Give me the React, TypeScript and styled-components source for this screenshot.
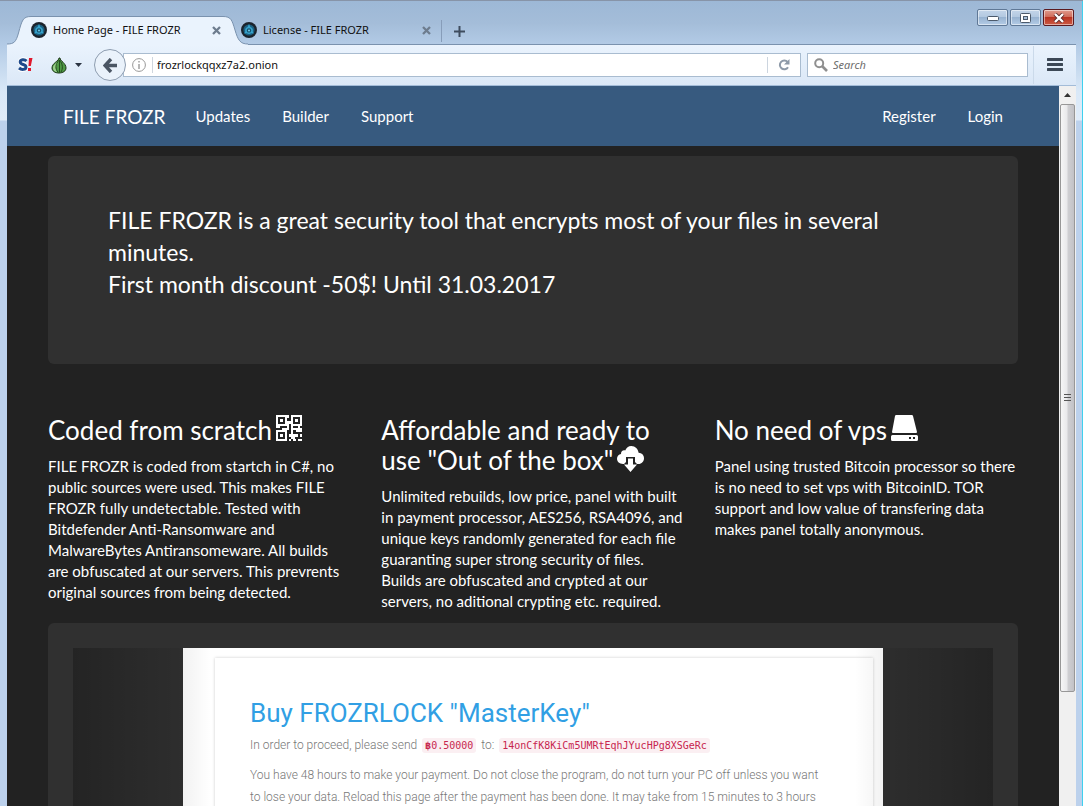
import React from "react";
import styled, { createGlobalStyle, css } from "styled-components";

const Global = createGlobalStyle`
  * { box-sizing: border-box; }
  html, body, #root { height: 100%; }
  body { margin: 0; overflow: hidden; background: #222; }
  button, input { font: inherit; color: inherit; }
  h1, h2, h3, p, ul { margin: 0; padding: 0; }
`;

const Window = styled.div`
  height: 100%;
  display: flex;
  flex-direction: column;
  padding: 0 7px;
  border-top: 1px solid #8794a8;
  background:
    linear-gradient(to bottom, #9db8d6 0px, #a4bdd9 22px, #b3cbe6 44px, #d9e8f7 90px, #e0ecf9 119px, #bcd1ec 120px);
  font: 11px/16px "Noto Sans", "Open Sans", sans-serif;
  color: #111;
  position: relative;
`;

const RightEdge = styled.div`
  position: absolute;
  top: 0;
  right: 0;
  bottom: 0;
  width: 1px;
  background: #3fd0ee;
`;

const TabStrip = styled.div`
  flex: none;
  display: flex;
  align-items: flex-end;
  height: 44px;
  padding-left: 14px;
  border-bottom: 1px solid #7a92ae;
`;

const Tab = styled.div<{ $active?: boolean }>`
  display: flex;
  align-items: center;
  height: 28px;
  width: 210px;
  padding: 0 10px;
  gap: 6px;
  position: relative;
  ${(p) => p.$active && css`z-index: 1;`}
`;

const TabShape = styled.svg`
  position: absolute;
  left: -21px;
  top: 0;
  z-index: -1;
`;

const TabTitle = styled.span`
  flex: 1;
  white-space: nowrap;
`;

const IconButton = styled.button`
  flex: none;
  display: flex;
  align-items: center;
  justify-content: center;
  padding: 0;
  border: 0;
  background: none;
`;

const NewTab = styled(IconButton)`
  width: 36px;
  height: 22px;
  margin-bottom: 2px;
  border-left: 1px solid #879db9;
`;

const WindowControls = styled.div`
  margin-left: auto;
  align-self: flex-start;
  display: flex;
  gap: 2px;
  padding: 8px 2px 0 0;
`;

const ControlButton = styled(IconButton)<{ $close?: boolean }>`
  width: 31px;
  height: 17px;
  border: 1px solid ${(p) => (p.$close ? "#5b1a20" : "#5f7896")};
  border-radius: 2px;
  box-shadow: inset 0 0 0 1px rgba(255, 255, 255, 0.5);
  background: ${(p) =>
    p.$close
      ? "linear-gradient(#e09b8d 0%, #cf6a58 48%, #b93422 50%, #cb5a44 100%)"
      : "linear-gradient(#c3d5e9 0%, #b2c8e0 48%, #98b3d1 50%, #b4cce6 100%)"};
`;

const Toolbar = styled.div`
  flex: none;
  display: flex;
  align-items: center;
  height: 41px;
  border-bottom: 1px solid #a3bcd8;
  background: linear-gradient(#eaf3fd, #dbe8f7);
`;

const AddonButton = styled(IconButton)`
  height: 24px;
  gap: 8px;
  margin-left: 11px;
  & + & { margin-left: 18px; }
`;

const BackButton = styled(IconButton)`
  width: 32px;
  height: 32px;
  margin-left: 12px;
  border: 1px solid #8e9db0;
  border-radius: 50%;
  background: #eaf2fb;
  z-index: 1;
`;

const Field = styled.div`
  display: flex;
  align-items: center;
  height: 24px;
  border: 1px solid #a9bcd0;
  background: #fff;
`;

const AddressBar = styled(Field)`
  flex: 1;
  margin-left: -3px;
  padding-left: 8px;
`;

const SearchBar = styled(Field)`
  width: 221px;
  margin: 0 5px 0 6px;
  padding-left: 6px;
  gap: 5px;
`;

const TextInput = styled.input<{ $divided?: boolean }>`
  flex: 1;
  min-width: 0;
  height: 16px;
  border: 0;
  padding: 0;
  outline: 0;
  background: none;
  ${(p) => p.$divided && css`
    margin-left: 6px;
    padding-left: 4px;
    border-left: 1px solid #cfd6de;
  `}
  &::placeholder { font-style: italic; color: #6d6d6d; opacity: 1; }
`;

const Reload = styled(IconButton)`
  width: 33px;
  height: 16px;
  border-left: 1px solid #ccd5df;
`;

const MenuButton = styled(IconButton)`
  width: 43px;
  height: 38px;
  border-left: 1px solid #cbdaea;
`;

const Body = styled.div`
  flex: 1;
  min-height: 0;
  display: flex;
`;

const Viewport = styled.main`
  flex: 1;
  min-width: 0;
  overflow: hidden;
  background: #222;
  color: #fff;
  font: 15px/21px Lato, sans-serif;
`;

const ScrollTrack = styled.div`
  flex: none;
  width: 17px;
  display: flex;
  flex-direction: column;
  padding: 0 1px;
  background: #f0f0f0;
`;

const ScrollArrow = styled(IconButton)`
  height: 18px;
`;

const ScrollThumb = styled.div`
  height: 588px;
  display: flex;
  align-items: center;
  justify-content: center;
  border: 1px solid #979797;
  border-radius: 2px;
  background: linear-gradient(to right, #f6f6f6 0%, #e9e9eb 45%, #cfcfd2 55%, #c2c2c6 100%);
`;

const Container = styled.div`
  max-width: 970px;
  margin: 0 auto;
`;

const NavBar = styled.nav`
  height: 60px;
  background: #375a7f;
`;

const NavRow = styled(Container)`
  height: 60px;
  display: flex;
  align-items: center;
`;

const NavLink = styled.a<{ $brand?: boolean }>`
  padding: 0 15px;
  color: #fff;
  text-decoration: none;
  ${(p) => p.$brand && css`font-size: 19px;`}
`;

const NavGroup = styled.div`
  display: flex;
  gap: 2px;
  &:last-child { margin-left: auto; }
`;

const Panel = styled.section`
  border-radius: 6px;
  background: #303030;
`;

const Jumbotron = styled(Panel)`
  min-height: 208px;
  margin: 10px 0 48px;
  padding: 48px 60px;
  font-size: 23px;
  line-height: 32px;
`;

const Features = styled.div`
  display: grid;
  grid-template-columns: repeat(3, 1fr);
  column-gap: 30px;
`;

const Feature = styled.article`
  h2 {
    margin: 3px 0 11px;
    font-size: 26px;
    font-weight: 400;
    line-height: 30px;
  }
  h2 svg {
    margin-left: 4px;
    vertical-align: -2px;
  }
`;

const CarouselPanel = styled(Panel)`
  margin-top: 11px;
  padding: 25px;
`;

const Carousel = styled.div`
  position: relative;
  height: 400px;
  overflow: hidden;
`;

const CarouselControl = styled.button<{ $side: "left" | "right" }>`
  position: absolute;
  top: 0;
  bottom: 0;
  ${(p) => p.$side}: 0;
  width: 15%;
  border: 0;
  padding: 0;
  background: linear-gradient(to ${(p) => (p.$side === "left" ? "right" : "left")}, rgba(0, 0, 0, 0.25), rgba(0, 0, 0, 0));
`;

const Slide = styled.div`
  width: 700px;
  height: 100%;
  margin: 0 auto;
  padding: 10px 10px 0 32px;
  background: #fff;
`;

const PaymentCard = styled.div`
  height: 100%;
  padding: 39px 42px 39px 35px;
  box-shadow: 0 0 3px rgba(0, 0, 0, 0.2);
  color: #777;
  font: 300 12px/22px Roboto, sans-serif;

  h3 {
    margin-bottom: 5px;
    color: #319fe4;
    font-size: 26px;
    font-weight: 400;
    line-height: 32px;
  }
  p + p { margin-top: 8px; }
`;

const Code = styled.code`
  margin: 0 2px;
  padding: 2px 3px;
  border-radius: 3px;
  background: #fbeff2;
  color: #c7254e;
  font: 10px/14px "DejaVu Sans Mono", monospace;
`;

const SiteIcon = () => (
  <svg width="16" height="16" viewBox="0 0 16 16" aria-hidden="true">
    <circle cx="8" cy="8" r="8" fill="#1b232c" />
    <circle cx="8" cy="8" r="5.6" fill="#1b5f80" />
    <path d="M8 2 L9.4 5 A3.8 3.8 0 0 1 11.7 9.5 L12.8 11.6 L10.2 11.3 A3.8 3.8 0 0 1 5.8 11.3 L3.2 11.6 L4.3 9.5 A3.8 3.8 0 0 1 6.6 5 Z" fill="#36a3cc" />
    <circle cx="8" cy="8.4" r="2.2" fill="#17506c" />
    <circle cx="8" cy="8.4" r="1" fill="#6fd0ee" />
  </svg>
);

const CloseGlyph = () => (
  <svg width="9" height="9" viewBox="0 0 9 9" aria-hidden="true">
    <path d="M1 1 L8 8 M8 1 L1 8" stroke="#6d7c8e" strokeWidth="2.3" />
  </svg>
);

const QrIcon = () => (
  <svg width="27" height="27" viewBox="0 0 27 27" aria-hidden="true" fill="#fff" shapeRendering="crispEdges">
    <path fillRule="evenodd" d="M0 0H11V11H0Z M2 2V9H9V2Z M4 4H7V7H4Z" />
    <path fillRule="evenodd" d="M15 0H26V11H15Z M17 2V9H24V2Z M19 4H22V7H19Z" />
    <path fillRule="evenodd" d="M0 15H11V26H0Z M2 17V24H9V17Z M4 19H7V22H4Z" />
    <path d="M11 0H13V3H11Z M11 6H15V9H13V11H11Z M0 11H4V13H0Z M6 13H11V11H13V15H6Z M15 11H17V13H22V11H24V13H26V17H20V15H15Z M15 15H17V19H22V22H19V24H15V22H13V19H15Z M24 19H26V22H24Z M22 24H26V26H22Z M13 24H15V26H13Z M17 24H20V26H17Z" />
  </svg>
);

const CloudIcon = () => (
  <svg width="27" height="26" viewBox="0 0 27 26" aria-hidden="true" fill="#fff">
    <path d="M6 18 C2.5 18 0 15.8 0 12.8 C0 10.3 1.8 8.3 4 8 C3.8 5.5 6 3.8 8.2 4.5 C9.2 1.8 11.5 0 14.3 0 C18.2 0 21.3 3 21.6 6.8 C24.8 6.9 27 9.2 27 12.2 C27 15.4 24.6 18 21.5 18 H20 L18 16 V11 H9 V16 L7 18 Z" />
    <path d="M11 12.5 H16 V18.5 H20 L13.5 26 L7 18.5 H11 Z" />
  </svg>
);

const DriveIcon = () => (
  <svg width="27" height="27" viewBox="0 0 27 27" aria-hidden="true" fill="#fff">
    <path d="M4 1 Q4.2 0 5.2 0 H20.8 Q21.8 0 22 1 L26 17 Q26 18 25 18 H2 Q1 18 1 17 Z" />
    <path fillRule="evenodd" d="M1.5 20 H25.5 Q27 20 27 21.5 V24.5 Q27 26 25.5 26 H1.5 Q0 26 0 24.5 V21.5 Q0 20 1.5 20 Z M18 22 V24 H20 V22 Z M22 22 V24 H24 V22 Z" />
  </svg>
);

export default function App() {
  return (
    <Window>
      <Global />
      <TabStrip>
        <Tab $active>
          <TabShape width="250" height="29" viewBox="0 0 250 29" aria-hidden="true">
            <path
              d="M7 28 C14 28 16 26 18.500 17 C22 4 23 0.500 31 0.500 H223 C231 0.500 232 4 235 14 C238 24 240 28 248 28 V29 H7 Z"
              fill="#eaf3fd"
            />
            <path
              d="M7 28 C14 28 16 26 18.500 17 C22 4 23 0.500 31 0.500 H223 C231 0.500 232 4 235 14 C238 24 240 28 248 28"
              fill="none"
              stroke="#7a92ae"
            />
          </TabShape>
          <SiteIcon />
          <TabTitle>Home Page - FILE FROZR</TabTitle>
          <IconButton aria-label="Close tab"><CloseGlyph /></IconButton>
        </Tab>
        <Tab>
          <SiteIcon />
          <TabTitle>License - FILE FROZR</TabTitle>
          <IconButton aria-label="Close tab"><CloseGlyph /></IconButton>
        </Tab>
        <NewTab aria-label="New tab">
          <svg width="11" height="11" viewBox="0 0 11 11">
            <path d="M5.5 0 V11 M0 5.5 H11" stroke="#3e4c5e" strokeWidth="2" />
          </svg>
        </NewTab>
        <WindowControls>
          <ControlButton aria-label="Minimize">
            <svg width="12" height="6" viewBox="0 0 12 6">
              <rect x=".5" y="1.5" width="11" height="4" rx="1" fill="#fff" stroke="#4c5a6b" />
            </svg>
          </ControlButton>
          <ControlButton aria-label="Maximize">
            <svg width="11" height="10" viewBox="0 0 11 10">
              <rect x=".5" y=".5" width="10" height="9" rx="1" fill="#fff" stroke="#4c5a6b" />
              <rect x="3.5" y="3.5" width="4" height="3" fill="#a9c0da" stroke="#4c5a6b" />
            </svg>
          </ControlButton>
          <ControlButton $close aria-label="Close">
            <svg width="12" height="10" viewBox="0 0 12 10">
              <path d="M2 1 L10 9 M10 1 L2 9" stroke="#5a2a2a" strokeWidth="4" />
              <path d="M2 1 L10 9 M10 1 L2 9" stroke="#fff" strokeWidth="2.4" />
            </svg>
          </ControlButton>
        </WindowControls>
      </TabStrip>

      <Toolbar>
        <AddonButton aria-label="NoScript">
          <svg width="15" height="16" viewBox="0 0 15 16">
            <path d="M8.5 4 C6.5 2 2.2 2.5 2.2 5 C2.2 8.2 8 6.8 8 10 C8 12.8 3.5 13.2 1 11" fill="none" stroke="#fff" strokeWidth="5" />
            <path d="M8.500 4 C6.500 2 2.200 2.500 2.200 5 C2.200 8.200 8 6.800 8 10 C8 12.800 3.500 13.200 1 11" fill="none" stroke="#1e4a8c" strokeWidth="3" />
            <path d="M11 1 H14.500 L12.800 9 H10.500 Z M10 11 H13 V14 H10 Z" fill="#e0182d" />
          </svg>
        </AddonButton>
        <AddonButton aria-label="Tor">
          <svg width="16" height="17" viewBox="0 0 16 17">
            <path d="M8 1 C8 4 1 6 1 11 C1 14 4 16 8 16 C12 16 15 14 15 11 C15 6 9 4 9 1 Z" fill="#4f9a45" stroke="#1d3518" />
            <path d="M8.5 4 C5 6 2 8 2 11 C2 13.5 4 15 6 15 C4 11 5 7 8.5 4 Z" fill="#9bd08a" />
            <path d="M8.5 3 C4 7 4 12 7 15 M8.5 3 V15.5 M8.5 3 C12 7 12 12 10 15" fill="none" stroke="#234a1d" />
          </svg>
          <svg width="7" height="4" viewBox="0 0 7 4"><path d="M0 0 H7 L3.5 4 Z" fill="#2b3442" /></svg>
        </AddonButton>
        <BackButton aria-label="Back">
          <svg width="15" height="15" viewBox="0 0 15 15">
            <path d="M8 1 L2 7.5 L8 14 M2.5 7.5 H14" fill="none" stroke="#4b5664" strokeWidth="3.4" />
          </svg>
        </BackButton>
        <AddressBar>
          <svg width="14" height="14" viewBox="0 0 14 14" aria-hidden="true">
            <circle cx="7" cy="7" r="6.4" fill="none" stroke="#999" />
            <path d="M7 6 V11 M7 3 V4.6" stroke="#999" strokeWidth="1.4" />
          </svg>
          <TextInput $divided aria-label="Address" defaultValue="frozrlockqqxz7a2.onion" />
          <Reload aria-label="Reload">
            <svg width="12" height="12" viewBox="0 0 12 12">
              <path d="M9.6 3 A4.4 4.4 0 1 0 10 8.2" fill="none" stroke="#8d99a8" strokeWidth="2" />
              <path d="M11.5 0 V5.5 H6 Z" fill="#8d99a8" />
            </svg>
          </Reload>
        </AddressBar>
        <SearchBar>
          <svg width="14" height="14" viewBox="0 0 14 14" aria-hidden="true">
            <circle cx="5.2" cy="5.2" r="4" fill="none" stroke="#8f8f8f" strokeWidth="2" />
            <path d="M8 8 L13 13" stroke="#8f8f8f" strokeWidth="2.6" />
          </svg>
          <TextInput aria-label="Search" placeholder="Search" />
        </SearchBar>
        <MenuButton aria-label="Menu">
          <svg width="16" height="14" viewBox="0 0 16 14">
            <path d="M1 1.5 H15 M1 6.5 H15 M1 11.5 H15" stroke="#3c4856" strokeWidth="3" strokeLinecap="round" />
          </svg>
        </MenuButton>
      </Toolbar>

      <Body>
        <Viewport>
          <NavBar>
            <NavRow>
              <NavLink $brand href="#">FILE FROZR</NavLink>
              <NavGroup>
                <NavLink href="#">Updates</NavLink>
                <NavLink href="#">Builder</NavLink>
                <NavLink href="#">Support</NavLink>
              </NavGroup>
              <NavGroup>
                <NavLink href="#">Register</NavLink>
                <NavLink href="#">Login</NavLink>
              </NavGroup>
            </NavRow>
          </NavBar>
          <Container>
            <Jumbotron>
              <p>
                FILE FROZR is a great security tool that encrypts most of your files in several minutes.
                <br />
                First month discount -50$! Until 31.03.2017
              </p>
            </Jumbotron>
            <Features>
              <Feature>
                <h2>Coded from scratch<QrIcon /></h2>
                <p>
                  FILE FROZR is coded from startch in C#, no public sources were used. This makes FILE FROZR
                  fully undetectable. Tested with Bitdefender Anti-Ransomware and MalwareBytes Antiransomeware.
                  All builds are obfuscated at our servers. This prevrents original sources from being detected.
                </p>
              </Feature>
              <Feature>
                <h2>Affordable and ready to use "Out of the box"<CloudIcon /></h2>
                <p>
                  Unlimited rebuilds, low price, panel with built in payment processor, AES256, RSA4096, and
                  unique keys randomly generated for each file guaranting super strong security of files.
                  Builds are obfuscated and crypted at our servers, no aditional crypting etc. required.
                </p>
              </Feature>
              <Feature>
                <h2>No need of vps<DriveIcon /></h2>
                <p>
                  Panel using trusted Bitcoin processor so there is no need to set vps with BitcoinID. TOR
                  support and low value of transfering data makes panel totally anonymous.
                </p>
              </Feature>
            </Features>
            <CarouselPanel>
              <Carousel>
                <Slide>
                  <PaymentCard>
                    <h3>Buy FROZRLOCK "MasterKey"</h3>
                    <p>
                      In order to proceed, please send <Code><b>฿</b>0.50000</Code> to:{" "}
                      <Code>14onCfK8KiCm5UMRtEqhJYucHPg8XSGeRc</Code>
                    </p>
                    <p>
                      You have 48 hours to make your payment. Do not close the program, do not turn your PC off
                      unless you want to lose your data. Reload this page after the payment has been done. It
                      may take from 15 minutes to 3 hours
                    </p>
                  </PaymentCard>
                </Slide>
                <CarouselControl $side="left" aria-label="Previous" />
                <CarouselControl $side="right" aria-label="Next" />
              </Carousel>
            </CarouselPanel>
          </Container>
        </Viewport>
        <ScrollTrack>
          <ScrollArrow aria-label="Scroll up">
            <svg width="7" height="4" viewBox="0 0 7 4"><path d="M0 4 H7 L3.5 0 Z" fill="#333" /></svg>
          </ScrollArrow>
          <ScrollThumb>
            <svg width="8" height="8" viewBox="0 0 8 8" aria-hidden="true">
              <path d="M0 .5 H7 M0 3.5 H7 M0 6.5 H7" stroke="#555" />
            </svg>
          </ScrollThumb>
        </ScrollTrack>
      </Body>
      <RightEdge />
    </Window>
  );
}
